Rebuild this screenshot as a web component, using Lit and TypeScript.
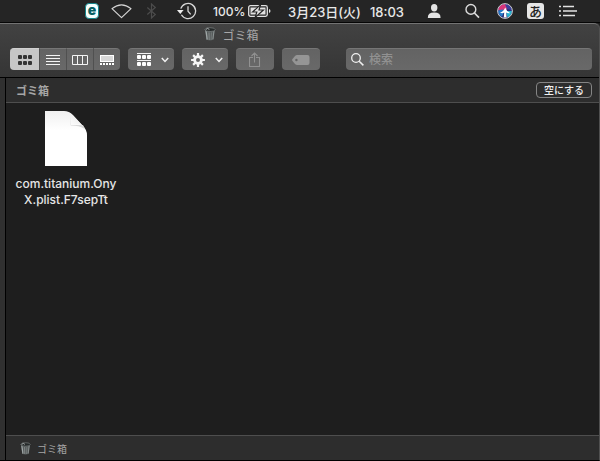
import { LitElement, html, svg, css } from "lit";
import { customElement, state } from "lit/decorators.js";
import { classMap } from "lit/directives/class-map.js";

const trash = html`
  <svg class="trash" viewBox="0 0 12 14" aria-hidden="true">
    <path d="M1 2.5 L2.4 12.6 Q6 14.4 9.6 12.6 L11 2.5 Z" fill="#565b5b" />
    <path d="M2 3.6 L3.2 12.6" stroke="#9fa6a6" stroke-width="1.3" fill="none" />
    <path d="M5 5.4 L5.2 13" stroke="#858b8b" stroke-width="1" fill="none" />
    <path d="M7.4 5.4 L7.1 13" stroke="#777d7d" stroke-width=".9" fill="none" />
    <path d="M10 3.6 L8.9 12.4" stroke="#8d9494" stroke-width="1" fill="none" />
    <ellipse cx="6" cy="2.6" rx="5.2" ry="1.9" fill="#262a2a" stroke="#7d8383" stroke-width=".7" />
    <path d="M1.6 2.8 L3.6 1.4 L5.4 2.6" stroke="#c4c8c8" stroke-width=".8" fill="none" />
  </svg>
`;

const chevron = html`
  <svg class="chevron" width="8" height="6" viewBox="0 0 8 6" aria-hidden="true">
    <path d="M.8 1 L4 4.4 L7.2 1" fill="none" stroke="#f2f2f2" stroke-width="1.5" />
  </svg>
`;

const cells = (xs: number[], ys: number[], w: number, h: number, r: number, fill: string) =>
  ys.map((y) => xs.map((x) => svg`<rect x=${x} y=${y} width=${w} height=${h} rx=${r} fill=${fill} />`));

@customElement("menu-bar")
export class MenuBar extends LitElement {
  static styles = css`
    :host {
      display: flex;
      justify-content: flex-end;
      align-items: center;
      gap: 12px;
      height: 22px;
      padding-right: 22px;
      background: #252525;
      border-bottom: 1px solid #060606;
      color: #e8e8e8;
      white-space: nowrap;
    }
    svg {
      display: block;
      flex: none;
    }
    .badge {
      box-sizing: border-box;
      width: 14px;
      height: 16px;
      border: 1px solid #14858a;
      border-radius: 4px;
      background: #f5ffff;
      color: #075f63;
      font-size: 14px;
      font-weight: 900;
      line-height: 12px;
      text-align: center;
    }
    .battery {
      display: flex;
      align-items: center;
      justify-content: space-between;
      box-sizing: border-box;
      width: 63px;
      padding-right: 5px;
      font-size: 12px;
      font-weight: 500;
    }
    .clock {
      display: flex;
      align-items: baseline;
      gap: 9px;
      width: 127px;
      font-size: 13px;
      font-weight: 500;
    }
    .ime {
      display: flex;
      align-items: center;
      justify-content: center;
      width: 17px;
      height: 16px;
      border-radius: 3px;
      background: #e6e6e6;
      color: #222;
      font-size: 13px;
      font-weight: 500;
      line-height: 16px;
    }
  `;

  render() {
    return html`
      <span class="badge">e</span>
      <svg width="21" height="16" viewBox="0 0 21 16">
        <path d="M1 5.6 Q10.5 -2 20 5.6 L10.5 14.6 Z" fill="none" stroke="#d4d4d4" stroke-width="1.2" stroke-linejoin="round" />
      </svg>
      <svg width="20" height="16" viewBox="0 0 20 16">
        <path d="M3.3 4.5 L11.3 11.5 L7.5 15 V1 L11.3 4.5 L3.3 11.5" fill="none" stroke="#4c4c4c" stroke-width="1.2" />
      </svg>
      <svg width="25" height="18" viewBox="0 0 25 18">
        <path d="M4.8 6.6 A7.6 7.6 0 1 1 5.4 12.8" fill="none" stroke="#d6d6d6" stroke-width="1.3" />
        <path d="M1 8 H7.6 L4.3 12 Z" fill="#eee" />
        <path d="M12 4.2 V9.2 L14.7 12.4" fill="none" stroke="#d6d6d6" stroke-width="1.3" />
      </svg>
      <div class="battery">
        <span>100%</span>
        <svg width="23" height="14" viewBox="0 0 23 14">
          <rect x=".7" y="1.7" width="18.6" height="10.6" rx="1.8" fill="none" stroke="#e2e2e2" stroke-width="1.3" />
          <rect x="2.5" y="3.5" width="15" height="7" fill="#e2e2e2" />
          <path d="M12.6 .6 L4.6 8 H8.8 L7.2 13.4 L15.4 6 H11 Z" fill="#e2e2e2" stroke="#252525" stroke-width="1.2" />
          <path d="M21 5 V9 Q22.5 8.6 22.5 7 Q22.5 5.4 21 5 Z" fill="#e2e2e2" />
        </svg>
      </div>
      <time class="clock"><span>3月23日(火)</span><span>18:03</span></time>
      <svg width="26" height="16" viewBox="0 0 26 16">
        <ellipse cx="7.2" cy="4.8" rx="3.2" ry="3.7" fill="#e4e4e4" />
        <path d="M.8 15 Q.6 9.6 7.2 9.6 Q13.8 9.6 13.6 15 Z" fill="#e4e4e4" />
      </svg>
      <svg width="20" height="16" viewBox="0 0 20 16">
        <circle cx="5.9" cy="6.4" r="4.9" fill="none" stroke="#dcdcdc" stroke-width="1.4" />
        <path d="M9.4 10 L14 14.6" stroke="#dcdcdc" stroke-width="1.6" />
      </svg>
      <svg width="18" height="16" viewBox="0 0 18 16">
        <circle cx="8" cy="8" r="7.3" fill="#2b2f78" />
        <path d="M1 7.6 Q1.4 2 7.6 1 Q12 1.6 13 5 L8 7 Z" fill="#d8357a" />
        <path d="M8 1 Q13.4 1.4 15 7 L10 6 Z" fill="#3a3f9c" />
        <path d="M1 8 Q4 5.4 8 7 L5 13.6 Q1.6 12 1 8 Z" fill="#2479c6" />
        <path d="M9 8 L15 8 Q14.4 12.8 10.4 14.6 Z" fill="#25b4cf" />
        <path d="M3 9.6 Q6.4 8.8 8.2 4.4 Q9.6 8.6 13.4 10 Q10.8 10.6 9.2 9.4 L9.6 14.6 H6.8 L7.2 9.4 Q5.4 10.8 3 9.6 Z" fill="#fff" />
        <circle cx="8" cy="8" r="7.4" fill="none" stroke="#cfcfd4" stroke-width="1" />
      </svg>
      <span class="ime">あ</span>
      <svg width="22" height="14" viewBox="0 0 22 14">
        <path d="M3 2.5 H5 M3 7 H5 M3 11.5 H5 M7 2.5 H18 M7 7 H21 M7 11.5 H19" stroke="#e2e2e2" stroke-width="1.6" />
      </svg>
    `;
  }
}

@customElement("finder-toolbar")
export class FinderToolbar extends LitElement {
  @state() private view = 0;

  static styles = css`
    :host {
      display: block;
      height: 53px;
      background: linear-gradient(#424242, #353535);
      border-top: 1px solid #737373;
      border-bottom: 1px solid #000;
      border-top-right-radius: 5px;
    }
    .title {
      display: flex;
      justify-content: center;
      align-items: center;
      gap: 6px;
      height: 20px;
      margin: 0 136px 0 0;
      padding-bottom: 4px;
      color: #a8a8a8;
      font-size: 12px;
      font-weight: 400;
    }
    .trash {
      width: 12px;
      height: 14px;
    }
    .row {
      display: flex;
      gap: 8px;
      padding: 0 7px 0 10px;
    }
    button {
      display: flex;
      align-items: center;
      justify-content: center;
      box-sizing: border-box;
      height: 22px;
      width: 38px;
      margin: 0;
      padding: 0;
      border: 0;
      border-top: 1px solid #767676;
      border-radius: 4px;
      background: linear-gradient(#636363, #696969);
    }
    .menu {
      gap: 10px;
      width: 46px;
      padding-left: 4px;
    }
    .views {
      display: flex;
    }
    .views button {
      width: 27px;
      border-radius: 0;
      border-left: 1px solid #505050;
    }
    .views button:first-child {
      width: 29px;
      border-left: 0;
      border-radius: 4px 0 0 4px;
    }
    .views button:last-child {
      border-radius: 0 4px 4px 0;
    }
    .views .on {
      background: #c6c6c6;
      border-top-color: #d0d0d0;
    }
    .search {
      display: flex;
      flex: 1;
      align-items: center;
      gap: 5px;
      box-sizing: border-box;
      min-width: 0;
      height: 22px;
      margin-left: 18px;
      padding-left: 5px;
      border-top: 1px solid #767676;
      border-radius: 4px;
      background: linear-gradient(#636363, #696969);
    }
    input {
      flex: 1;
      min-width: 0;
      padding: 0;
      border: 0;
      outline: 0;
      background: none;
      color: #eee;
      font: inherit;
      font-size: 12px;
      font-weight: 500;
    }
    input::placeholder {
      color: #919191;
    }
    svg {
      display: block;
      flex: none;
    }
  `;

  private icons = [
    {
      label: "アイコン",
      draw: (on: boolean) => cells([0, 5, 10], [0, 6], 4, 4, 1, on ? "#333" : "#fff"),
    },
    {
      label: "リスト",
      draw: () => svg`<path d="M0 .5 H14 M0 3.5 H14 M0 6.5 H14 M0 9.5 H14" stroke="#f4f4f4" />`,
    },
    {
      label: "カラム",
      draw: () => svg`<path d="M-.5 .5 H14.5 V9.5 H-.5 Z M4.5 .5 V9.5 M9.5 .5 V9.5" fill="none" stroke="#f4f4f4" />`,
    },
    {
      label: "ギャラリー",
      draw: () => svg`
        <rect x=".5" y=".5" width="13" height="6" fill="#d8d8d8" stroke="#fff" />
        ${cells([0, 3, 6, 9, 12], [8], 2, 2, 0, "#fff")}`,
    },
  ];

  render() {
    return html`
      <h1 class="title">${trash}<span>ゴミ箱</span></h1>
      <div class="row">
        <div class="views">
          ${this.icons.map(
            (icon, i) => html`
              <button
                class=${classMap({ on: this.view === i })}
                aria-label=${icon.label}
                aria-pressed=${this.view === i}
                @click=${() => (this.view = i)}
              >
                <svg width="14" height="10" viewBox="0 0 14 10" overflow="visible">${icon.draw(this.view === i)}</svg>
              </button>
            `
          )}
        </div>
        <button class="menu" aria-label="グループ">
          <svg width="14" height="13" viewBox="0 0 14 13">
            <path d="M0 .5 H14 M0 7.5 H14" stroke="#f4f4f4" />
            ${cells([0, 5, 10], [2, 9], 4, 4, 1, "#fff")}
          </svg>
          ${chevron}
        </button>
        <button class="menu" aria-label="アクション">
          <svg width="14" height="14" viewBox="-7 -7 14 14">
            ${[0, 45, 90, 135].map(
              (a) => svg`<path d="M0 -6.9 V-3.6 M0 3.6 V6.9" transform="rotate(${a})" stroke="#f6f6f6" stroke-width="2.2" />`
            )}
            <circle r="3.4" fill="none" stroke="#f6f6f6" stroke-width="2.8" />
          </svg>
          ${chevron}
        </button>
        <button aria-label="共有">
          <svg width="12" height="16" viewBox="0 0 12 16">
            <path d="M4 5.5 H.5 V14.5 H10.5 V5.5 H7 M5.5 10.5 V1 M2.5 4 L5.5 1 L8.5 4" fill="none" stroke="#919191" stroke-width="1.1" />
          </svg>
        </button>
        <button aria-label="タグ">
          <svg width="18" height="10" viewBox="0 0 18 10">
            <path d="M5 0 H15.5 Q17.5 0 17.5 2 V8 Q17.5 10 15.5 10 H5 Q4 10 3 9 L.5 6 Q-.3 5 .5 4 L3 1 Q4 0 5 0 Z" fill="#959595" />
            <circle cx="4.4" cy="5" r="1.2" fill="#636363" />
          </svg>
        </button>
        <label class="search">
          <svg width="13" height="13" viewBox="0 0 13 13">
            <circle cx="5" cy="5" r="4.3" fill="none" stroke="#f0f0f0" stroke-width="1.3" />
            <path d="M8.2 8.2 L12.4 12.4" stroke="#f0f0f0" stroke-width="1.5" />
          </svg>
          <input type="search" placeholder="検索" aria-label="検索" />
        </label>
      </div>
    `;
  }
}

@customElement("app-root")
export class AppRoot extends LitElement {
  static styles = css`
    :host {
      display: flex;
      flex-direction: column;
      box-sizing: border-box;
      min-height: 100vh;
      background: #1e1e1e;
      font-family: Inter, "Noto Sans CJK JP", sans-serif;
      cursor: default;
    }
    .window {
      display: flex;
      flex: 1;
      flex-direction: column;
      border-right: 1px solid #505050;
      border-bottom: 1px solid #000;
      border-top-right-radius: 5px;
    }
    .body {
      display: flex;
      flex: 1;
    }
    .sidebar {
      width: 5px;
      background: #303030;
      border-right: 1px solid #000;
    }
    .main {
      display: flex;
      flex: 1;
      flex-direction: column;
      min-width: 0;
    }
    .bar {
      display: flex;
      align-items: center;
      box-sizing: border-box;
      height: 25px;
      background: #2d2d2d;
      color: #a6a6a6;
    }
    .header {
      justify-content: space-between;
      padding: 0 7px 0 10px;
      border-bottom: 1px solid #4e4e4e;
    }
    h2 {
      margin: 0;
      font-size: 11px;
      font-weight: 700;
    }
    .empty {
      box-sizing: border-box;
      height: 16px;
      padding: 0 7px;
      border: 1px solid #858585;
      border-radius: 4px;
      background: none;
      color: #f0f0f0;
      font: inherit;
      font-size: 10px;
      font-weight: 500;
      line-height: 12px;
    }
    .files {
      flex: 1;
      padding: 8px 7px;
    }
    .file {
      display: flex;
      flex-direction: column;
      align-items: center;
      gap: 10px;
      width: 106px;
      margin: 0;
      color: #e6e6e6;
      font-size: 12px;
      font-weight: 500;
      line-height: 16px;
      text-align: center;
    }
    .file svg {
      display: block;
    }
    .footer {
      gap: 6px;
      padding-left: 14px;
      border-top: 1px solid #4e4e4e;
      font-size: 10px;
    }
    .trash {
      width: 11px;
      height: 13px;
    }
  `;

  render() {
    return html`
      <menu-bar></menu-bar>
      <div class="window">
        <finder-toolbar></finder-toolbar>
        <div class="body">
          <div class="sidebar"></div>
          <main class="main">
            <div class="bar header">
              <h2>ゴミ箱</h2>
              <button class="empty">空にする</button>
            </div>
            <div class="files">
              <figure class="file">
                <svg width="42" height="55" viewBox="0 0 42 55">
                  <defs>
                    <linearGradient id="page" x1="0" y1="0" x2="0" y2="1">
                      <stop offset="0" stop-color="#f0f0f0" />
                      <stop offset=".35" stop-color="#fff" />
                    </linearGradient>
                    <linearGradient id="fold" x1="0" y1="1" x2="1" y2="0">
                      <stop offset="0" stop-color="#fff" />
                      <stop offset="1" stop-color="#e4e4e4" />
                    </linearGradient>
                  </defs>
                  <path d="M0 0 H19 Q24 0 28 4 L38 15 Q42 19 42 24 V55 H0 Z" fill="url(#page)" />
                  <path d="M26 3 V14 H38 L40 18 Q34 14.6 25.6 14.6 Z" fill="#d9d9d9" />
                  <path d="M24 1 Q27.6 5 27 13 Q34 12 38 15 Z" fill="url(#fold)" />
                </svg>
                <figcaption>com.titanium.Ony<wbr />X.plist.F7sepTt</figcaption>
              </figure>
            </div>
            <footer class="bar footer">${trash}<span>ゴミ箱</span></footer>
          </main>
        </div>
      </div>
    `;
  }
}
